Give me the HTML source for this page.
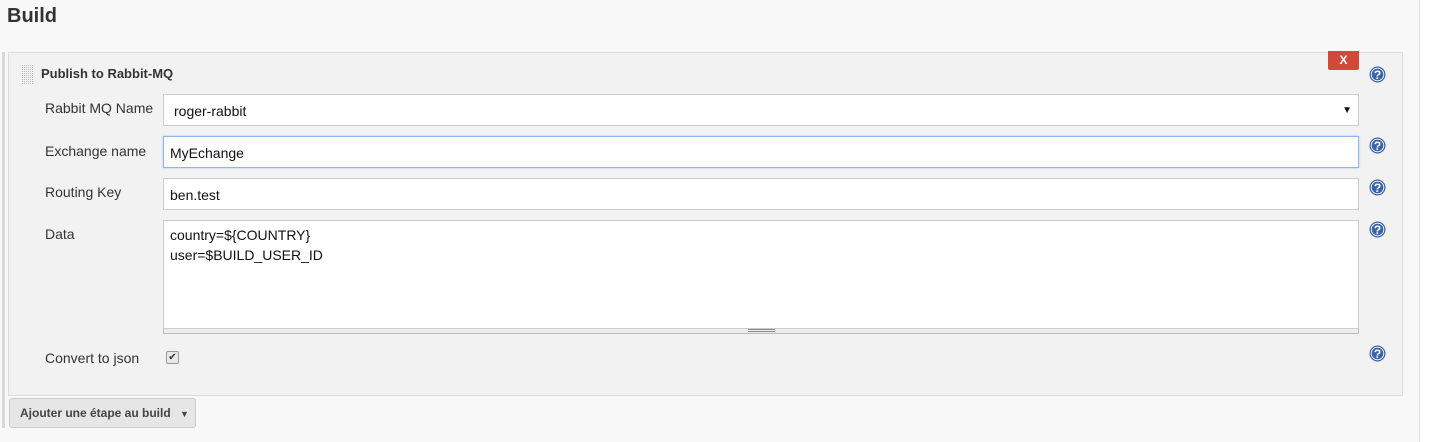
<!DOCTYPE html>
<html><head><meta charset="utf-8"><style>
body{margin:0;width:1429px;height:442px;background:#f8f8f8;font-family:"Liberation Sans",Arial,sans-serif;color:#333;position:relative;overflow:hidden}
.a{position:absolute}
.lbl{position:absolute;left:45px;font-size:14px;color:#333}
.inp{position:absolute;left:163px;height:30px;background:#fff;border:1px solid #ccc;font-size:14px;line-height:30px;padding-left:10px;box-sizing:border-box;width:1196px;color:#111}
.help{position:absolute;left:1369px;width:17px;height:17px}
</style></head><body>
<div class="a" style="left:7px;top:5px;font-size:20px;font-weight:bold;color:#333">Build</div>
<div class="a" style="left:2px;top:52px;width:3px;height:376px;background:#d8d8d8"></div>
<div class="a" style="left:1419px;top:0;width:1px;height:442px;background:#e0e0e0"></div>
<div class="a" style="left:1420px;top:0;width:9px;height:442px;background:#fff"></div>
<div class="a" style="left:8px;top:52px;width:1393px;height:342px;background:#f2f2f2;border:1px solid #dcdcdc"></div>
<svg class="a" style="left:22px;top:65px" width="11" height="19"><defs><pattern id="g" width="2" height="2" patternUnits="userSpaceOnUse"><rect width="1" height="1" fill="#bbb"/></pattern></defs><rect width="11" height="19" fill="url(#g)"/></svg>
<div class="a" style="left:41px;top:66px;font-size:13px;font-weight:bold;color:#333">Publish to Rabbit-MQ</div>
<div class="a" style="left:1328px;top:51px;width:31px;height:19px;background:#d24939;border-radius:0 0 2px 2px;color:#fff;font-size:12px;font-weight:bold;text-align:center;line-height:19px">X</div>

<div class="lbl" style="top:100px">Rabbit MQ Name</div>
<div class="inp" style="top:94px;height:32px;line-height:32px">roger-rabbit<span style="position:absolute;right:6px;top:0;font-size:10px">▼</span></div>
<div class="lbl" style="top:143px">Exchange name</div>
<div class="inp" style="top:136px;height:32px;line-height:32px;border:1px solid #8fb4e6;box-shadow:0 0 2px #a9c6ee;padding-left:6px">MyEchange</div>
<div class="lbl" style="top:184px">Routing Key</div>
<div class="inp" style="top:178px;height:32px;line-height:32px;padding-left:6px">ben.test</div>
<div class="lbl" style="top:226px">Data</div>
<div class="inp" style="top:220px;height:109px;line-height:20px;padding:4px 6px">country=${COUNTRY}<br>user=$BUILD_USER_ID</div>
<div class="a" style="left:163px;top:328px;width:1194px;height:4px;background:#eee;border:1px solid #bbb;border-top:1px solid #ccc"></div>
<div class="a" style="left:748px;top:329px;width:27px;height:1px;border-top:1px solid #888;border-bottom:1px solid #888"></div>
<div class="lbl" style="top:350px">Convert to json</div>
<div class="a" style="left:166px;top:351px;width:11px;height:11px;border:1px solid #999;border-radius:2px;background:#e8e8e8;font-size:10px;line-height:11px;text-align:center;color:#333">✔</div>

<svg width="0" height="0" style="position:absolute"><defs><g id="h"><circle cx="8.5" cy="8.5" r="8" fill="#3a64a6"/><circle cx="8.5" cy="8.5" r="6.3" fill="none" stroke="#fff" stroke-width="0.9"/><text x="8.5" y="13" font-size="12" font-weight="bold" fill="#fff" text-anchor="middle" font-family="Liberation Sans">?</text></g></defs></svg>
<svg class="help" style="top:66px"><use href="#h"/></svg>
<svg class="help" style="top:137px"><use href="#h"/></svg>
<svg class="help" style="top:179px"><use href="#h"/></svg>
<svg class="help" style="top:221px"><use href="#h"/></svg>
<svg class="help" style="top:345px"><use href="#h"/></svg>

<div class="a" style="left:9px;top:398px;width:187px;height:30px;background:#e6e6e6;border:1px solid #ccc;border-radius:3px;font-size:12px;font-weight:bold;color:#444;line-height:28px;padding-left:10px;box-sizing:border-box">Ajouter une étape au build <span style="font-size:9px;margin-left:6px">▼</span></div>
</body></html>
